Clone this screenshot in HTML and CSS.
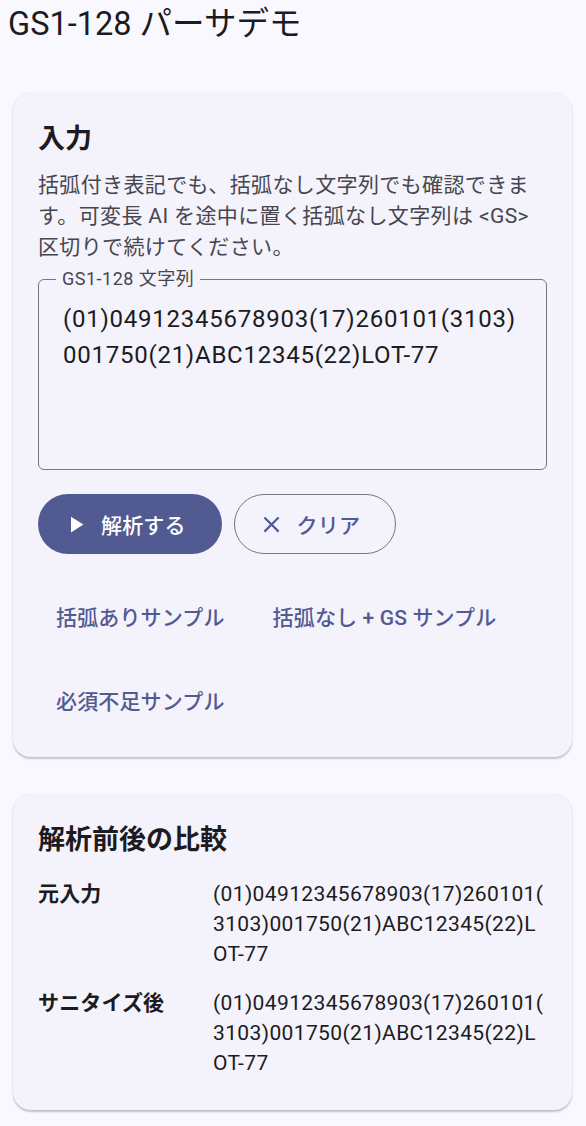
FILE: index.html
```html
<!DOCTYPE html>
<html lang="ja">
<head>
<meta charset="utf-8">
<title>GS1-128 パーサデモ</title>
<link rel="stylesheet" href="styles.css">
</head>
<body>
<header class="app-title">GS1-128 パーサデモ</header>
<main class="content">
  <section class="card">
    <h2 class="card-heading">入力</h2>
    <p class="card-desc">括弧付き表記でも、括弧なし文字列でも確認できます。可変長 AI を途中に置く括弧なし文字列は &lt;GS&gt; 区切りで続けてください。</p>
    <fieldset class="field">
      <legend class="field-label">GS1-128 文字列</legend>
      <textarea class="field-input" readonly>(01)04912345678903(17)260101(3103)001750(21)ABC12345(22)LOT-77</textarea>
    </fieldset>
    <div class="actions">
      <button class="btn btn-filled" type="button">
        <svg class="btn-icon" viewBox="0 0 24 24" aria-hidden="true"><path d="M8 5v14l11-7z" fill="currentColor"/></svg>
        <span>解析する</span>
      </button>
      <button class="btn btn-outlined" type="button">
        <svg class="btn-icon" viewBox="0 0 24 24" aria-hidden="true"><path d="M19 6.41L17.59 5 12 10.59 6.41 5 5 6.41 10.59 12 5 17.59 6.41 19 12 13.41 17.59 19 19 17.59 13.41 12z" fill="currentColor"/></svg>
        <span>クリア</span>
      </button>
    </div>
    <div class="samples">
      <button class="text-btn" type="button">括弧ありサンプル</button>
      <button class="text-btn" type="button">括弧なし + GS サンプル</button>
      <button class="text-btn" type="button">必須不足サンプル</button>
    </div>
  </section>

  <section class="card card-compare">
    <h2 class="card-heading">解析前後の比較</h2>
    <dl class="compare">
      <div class="compare-row">
        <dt class="compare-label">元入力</dt>
        <dd class="compare-value">(01)04912345678903(17)260101(3103)001750(21)ABC12345(22)LOT-77</dd>
      </div>
      <div class="compare-row">
        <dt class="compare-label">サニタイズ後</dt>
        <dd class="compare-value">(01)04912345678903(17)260101(3103)001750(21)ABC12345(22)LOT-77</dd>
      </div>
    </dl>
  </section>
</main>
</body>
</html>
```

FILE: styles.css
```css
* {
  box-sizing: border-box;
}

html, body {
  margin: 0;
  padding: 0;
  background: #faf8ff;
}

body {
  font-family: Roboto, "Noto Sans CJK JP", sans-serif;
  color: #1b1b21;
  width: 586px;
  min-height: 1126px;
}

.app-title {
  display: block;
  padding: 4px 0 0 8px;
  font-size: 32.5px;
  line-height: 40px;
  font-weight: 400;
  color: #1b1b21;
}

.content {
  padding: 49px 14px 0 13px;
  display: flex;
  flex-direction: column;
  gap: 37px;
}

.card {
  background: #f4f2fa;
  border-radius: 18px;
  padding: 28px 25px 21px;
  box-shadow: 0 1.5px 2px rgba(0, 0, 0, 0.22), 0 0 1px rgba(0, 0, 0, 0.05);
}

.card-compare {
  padding-bottom: 32px;
}

.card-heading {
  margin: 0 0 13px;
  font-size: 27px;
  line-height: 36px;
  font-weight: 700;
  color: #1b1b21;
}

.card-desc {
  margin: 0 0 6px;
  font-size: 21px;
  line-height: 31px;
  letter-spacing: 0.375px;
  color: #46464f;
}

.field {
  margin: 0;
  padding: 0;
  border: 1px solid #777680;
  border-radius: 6px;
  min-width: 0;
}

.field-label {
  margin-left: 17px;
  padding: 0 6px;
  font-size: 18px;
  line-height: 20px;
  letter-spacing: 0.5px;
  color: #46464f;
}

.field-input {
  display: block;
  width: 100%;
  height: 180px;
  margin: 0;
  padding: 12px 24px 0;
  border: none;
  outline: none;
  background: transparent;
  resize: none;
  overflow: hidden;
  font-family: Roboto, "Noto Sans CJK JP", sans-serif;
  font-size: 24px;
  line-height: 36px;
  letter-spacing: 0.75px;
  color: #1b1b21;
  word-break: break-all;
  line-break: anywhere;
}

.actions {
  display: flex;
  gap: 12px;
  margin-top: 24px;
}

.btn {
  display: inline-flex;
  align-items: center;
  gap: 12px;
  height: 60px;
  padding: 0 36px 0 24px;
  border-radius: 30px;
  font-family: Roboto, "Noto Sans CJK JP", sans-serif;
  font-size: 21px;
  font-weight: 500;
  letter-spacing: 0.15px;
  cursor: pointer;
}

.btn-icon {
  width: 27px;
  height: 27px;
  flex: none;
}

.btn-filled {
  background: #525a92;
  color: #ffffff;
  border: none;
}

.btn-outlined {
  background: transparent;
  color: #525a92;
  border: 1.5px solid #777680;
  padding-left: 23px;
  padding-right: 35px;
}

.samples {
  display: flex;
  flex-wrap: wrap;
  gap: 12px;
  margin-top: 26px;
}

.text-btn {
  height: 72px;
  padding: 0 18px;
  border: none;
  background: transparent;
  font-family: Roboto, "Noto Sans CJK JP", sans-serif;
  font-size: 21px;
  font-weight: 500;
  letter-spacing: 0.15px;
  color: #525a92;
  cursor: pointer;
}

.compare {
  margin: 21px 0 0;
  display: flex;
  flex-direction: column;
  gap: 19px;
}

.card-compare .card-heading {
  margin-bottom: 0;
}

.compare-row {
  display: grid;
  grid-template-columns: 175px 1fr;
}

.compare-label {
  margin: 0;
  font-size: 21px;
  line-height: 30px;
  font-weight: 700;
  letter-spacing: 0.15px;
  color: #1b1b21;
}

.compare-value {
  margin: 0;
  font-size: 21px;
  line-height: 30px;
  letter-spacing: 0.375px;
  color: #1b1b21;
  word-break: break-all;
  line-break: anywhere;
}
```
